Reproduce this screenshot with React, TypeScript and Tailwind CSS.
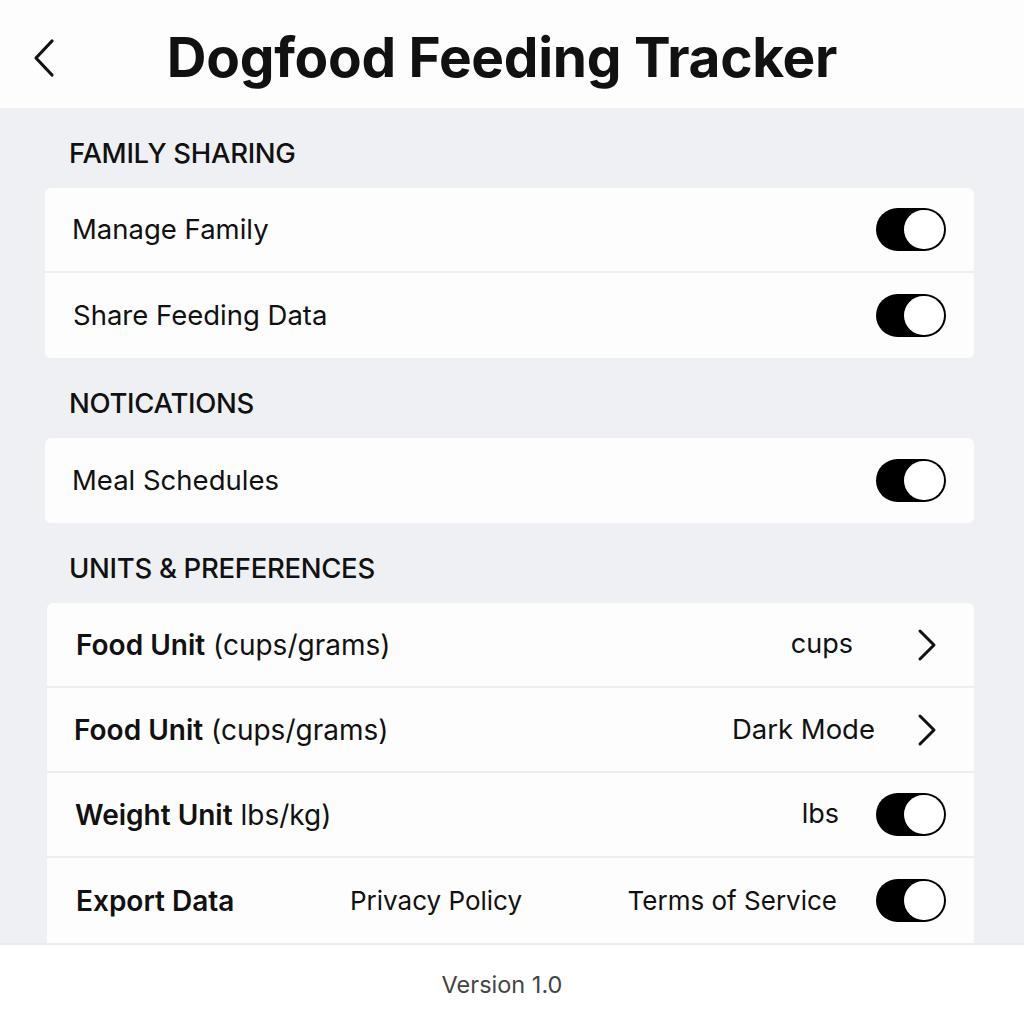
function Toggle() {
  return (
    <div className="w-[70px] h-[43px] rounded-full bg-black flex items-center justify-end p-[2px]">
      <div className="w-[40px] h-[39px] rounded-full bg-white" />
    </div>
  );
}

function Chevron() {
  return (
    <svg className="mr-[8px]" width="22" height="34" viewBox="0 0 22 34" fill="none" stroke="#111" strokeWidth="3" strokeLinecap="round" strokeLinejoin="round">
      <path d="M4 3 L18 17 L4 31" />
    </svg>
  );
}

function Section({ title }: { title: string }) {
  return (
    <h2 className="px-[69px] h-[80px] flex items-center pt-[12px] text-[27.5px] font-medium tracking-[-0.3px] text-[#111]">
      {title}
    </h2>
  );
}

function Row({ children, last = false }: { children: React.ReactNode; last?: boolean }) {
  return (
    <div
      className={`h-[85px] flex items-center pl-[27px] pr-[28px] ${last ? '' : 'border-b-2 border-[#eceef1]'}`}
    >
      {children}
    </div>
  );
}

export default function App() {
  return (
    <div className="w-[1024px] h-[1024px] flex flex-col bg-white text-[#111]" style={{ fontFamily: 'Inter, "Noto Sans", sans-serif' }}>
      {/* header */}
      <header className="h-[108px] shrink-0 flex items-center relative bg-[#fdfdfd]">
        <svg className="absolute left-[30px] top-[37px]" width="28" height="42" viewBox="0 0 28 42" fill="none" stroke="#111" strokeWidth="3.2" strokeLinecap="round" strokeLinejoin="round">
          <path d="M22 4 L6 21 L22 38" />
        </svg>
        <h1 className="w-full text-center text-[55px] font-bold tracking-[-0.3px] pt-[6px] pr-[20px]">Dogfood Feeding Tracker</h1>
      </header>

      <main className="flex-1 bg-[#eff0f3] flex flex-col">
        <Section title="FAMILY SHARING" />
        <div className="mx-[45px] mr-[50px] bg-[#fdfdfd] rounded-md text-[27.5px]">
          <Row>
            <span className="flex-1">Manage Family</span>
            <Toggle />
          </Row>
          <Row last>
            <span className="flex-1 pl-[1px]">Share Feeding Data</span>
            <Toggle />
          </Row>
        </div>

        <Section title="NOTICATIONS" />
        <div className="mx-[45px] mr-[50px] bg-[#fdfdfd] rounded-md text-[27.5px]">
          <Row last>
            <span className="flex-1">Meal Schedules</span>
            <Toggle />
          </Row>
        </div>

        <Section title="UNITS & PREFERENCES" />
        <div className="ml-[47px] mr-[50px] bg-[#fdfdfd] rounded-t-md text-[28px]">
          <Row>
            <span className="flex-1 pl-[2px]"><b className="font-semibold">Food Unit</b> (cups/grams)</span>
            <span className="mr-[63px] text-[27px]">cups</span>
            <Chevron />
          </Row>
          <Row>
            <span className="flex-1"><b className="font-semibold">Food Unit</b> (cups/grams)</span>
            <span className="mr-[41px] text-[27.5px]">Dark Mode</span>
            <Chevron />
          </Row>
          <Row>
            <span className="flex-1 pl-[1px]"><b className="font-semibold">Weight Unit</b> lbs/kg)</span>
            <span className="mr-[37px] text-[27px]">lbs</span>
            <Toggle />
          </Row>
          <Row last>
            <span className="w-[276px] pl-[2px] font-semibold">Export Data</span>
            <span className="flex-1 text-[26px]">Privacy Policy</span>
            <span className="mr-[39px] text-[26px]">Terms of Service</span>
            <Toggle />
          </Row>
        </div>
      </main>

      <footer className="h-[82px] shrink-0 flex items-center justify-center border-t-2 border-[#e8ebef] text-[23.5px] text-[#444] pr-[20px]">
        Version 1.0
      </footer>
    </div>
  );
}
